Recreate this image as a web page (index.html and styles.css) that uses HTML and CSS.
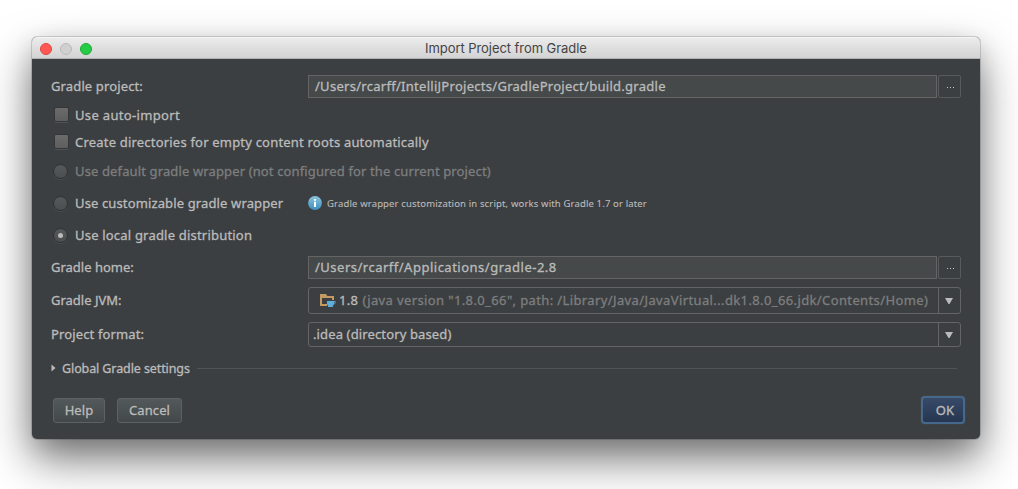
FILE: index.html
```html
<!DOCTYPE html>
<html lang="en">
<head>
<meta charset="utf-8">
<title>Import Project from Gradle</title>
<link rel="stylesheet" href="styles.css">
</head>
<body>
<div class="dialog">
  <div class="titlebar">
    <i class="light light-close"></i><i class="light light-min"></i><i class="light light-zoom"></i>
    <span class="title">Import Project from Gradle</span>
  </div>
  <div class="content">
    <div class="row row-path">
      <label class="label ls-13">Gradle project:</label>
      <div class="input ls-28">/Users/rcarff/IntelliJProjects/GradleProject/build.gradle</div>
      <div class="browse"><i></i><i></i><i></i></div>
    </div>
    <div class="row row-auto"><i class="checkbox"></i><span class="ls-34">Use auto-import</span></div>
    <div class="row row-dirs"><i class="checkbox"></i><span class="ls-20">Create directories for empty content roots automatically</span></div>
    <div class="row row-default"><i class="radio"></i><span class="muted ls-13">Use default gradle wrapper (not configured for the current project)</span></div>
    <div class="row row-radio"><div class="option"><i class="radio"></i><span class="ls-13">Use customizable gradle wrapper</span></div>
      <svg class="info" width="14" height="14" viewBox="0 0 14 14">
        <defs><linearGradient id="blue" x1="0" y1="0" x2="0" y2="1"><stop offset="0" stop-color="#8cc3de"/><stop offset="1" stop-color="#3d8fbe"/></linearGradient></defs>
        <circle cx="7" cy="7" r="6.9" fill="url(#blue)"/>
        <path d="M6 3h2v1.700H6zM6 5.700h2V11H6z" fill="#fff"/>
      </svg>
      <span class="hint">Gradle wrapper customization in script, works with Gradle 1.7 or later</span>
    </div>
    <div class="row row-radio"><i class="radio radio-on"></i><span class="ls-20">Use local gradle distribution</span></div>
    <div class="row row-path row-home">
      <label class="label">Gradle home:</label>
      <div class="input ls-50">/Users/rcarff/Applications/gradle-2.8</div>
      <div class="browse"><i></i><i></i><i></i></div>
    </div>
    <div class="row row-jvm">
      <label class="label">Gradle JVM:</label>
      <div class="combo">
        <div class="combo-text combo-jdk">
          <svg width="16" height="14" viewBox="0 0 16 14">
            <path fill="#c29a62" d="M0 1h6l1.300 2H14v4h-2V5H2v6h5v2H0z"/>
            <path fill="#5cb0de" d="M7 8h7v2.500c0 1.200-.8 2-1.500 2.500h.5v1H8v-1h.5C7.500 12.500 7 11.500 7 10.500z"/>
            <path fill="none" stroke="#5cb0de" stroke-width=".9" d="M13.500 8.500h1.700v1.300c0 .8-.7 1.200-1.700 1.200"/>
          </svg>
          <span class="version">1.8</span><span class="muted ls-38">(java version "1.8.0_66", path: /Library/Java/JavaVirtual...dk1.8.0_66.jdk/Contents/Home)</span>
        </div>
        <div class="arrow"><svg width="8" height="6" viewBox="0 0 8 6"><path d="M0 0h8L4.500 6h-1z" fill="#bbb"/></svg></div>
      </div>
    </div>
    <div class="row row-format">
      <label class="label ls-13">Project format:</label>
      <div class="combo">
        <div class="combo-text ls-13">.idea (directory based)</div>
        <div class="arrow"><svg width="8" height="6" viewBox="0 0 8 6"><path d="M0 0h8L4.500 6h-1z" fill="#bbb"/></svg></div>
      </div>
    </div>
    <div class="row row-global">
      <svg width="5" height="8" viewBox="0 0 5 8"><path d="M.5 .5 4.500 4 .5 7.500z" fill="#bbb"/></svg>
      <span class="global">Global Gradle settings</span>
      <i class="rule"></i>
    </div>
    <div class="buttons">
      <div class="button help">Help</div>
      <div class="button cancel">Cancel</div>
      <div class="button ok">OK</div>
    </div>
  </div>
</div>
</body>
</html>
```
FILE: styles.css
```css
* { box-sizing: border-box; }
body {
  margin: 0;
  height: 489px;
  padding: 37px 38px 0 32px;
  overflow: hidden;
  background: #fff;
  color: #bbb;
  font: 13px/18px "Noto Sans", sans-serif;
  white-space: nowrap;
  -webkit-text-stroke: .3px;
}
i { display: block; flex: none; }
svg { display: block; flex: none; }
.dialog {
  width: 948px;
  height: 402px;
  border-radius: 5px;
  background: #3c3f41;
  box-shadow: 0 0 0 1px rgba(0,0,0,.15), 0 20px 44px rgba(0,0,0,.54), 0 6px 22px rgba(0,0,0,.1);
}
.titlebar {
  display: flex;
  gap: 8px;
  height: 22px;
  padding: 5px 8px 0;
  border-radius: 5px 5px 0 0;
  border-top: 1px solid #f5f5f5;
  border-bottom: 1px solid #b3b3b3;
  background: linear-gradient(#ebebeb, #d3d3d3);
}
.light { width: 12px; height: 12px; border-radius: 50%; border: 1px solid; }
.light-close { background: #ff5855; border-color: #e0443f; }
.light-min { background: #d0d0d0; border-color: #bababa; }
.light-zoom { background: #26cb46; border-color: #18ab34; }
.title {
  margin: -4px 0 0 325px;
  color: #444;
  font: 13px/18px Inter, sans-serif;
  letter-spacing: -.06px;
  -webkit-text-stroke: 0;
}
.content { padding: 16px 19px 0; }
.row { display: flex; align-items: center; }
.label { width: 257px; flex: none; padding-bottom: 2px; }
.ls-13 { letter-spacing: .13px; }
.ls-20 { letter-spacing: .2px; }
.ls-28 { letter-spacing: .28px; }
.ls-34 { letter-spacing: .34px; }
.ls-38 { letter-spacing: .38px; }
.ls-50 { letter-spacing: .5px; }
.muted { color: #7c7e7f; }
.row-path { height: 23px; }
.input {
  width: 629px;
  height: 23px;
  padding-left: 6px;
  line-height: 20px;
  border: 1px solid #646464;
  background: #45494a;
}
.browse {
  display: flex;
  justify-content: center;
  align-items: center;
  gap: 2px;
  width: 23px;
  height: 23px;
  margin-left: 1px;
  padding: 2px 0 0 2px;
  border: 1px solid #585a5b;
  border-radius: 2px;
}
.browse i { width: 1px; height: 1px; background: #c8c8c8; }
.row-auto, .row-dirs { height: 27px; }
.row-auto { margin-top: 3px; }
.row-default { height: 32px; }
.row-radio { height: 32px; }
.checkbox {
  width: 15px;
  height: 15px;
  margin: 0 6px 0 3px;
  border: 1px solid #343637;
  border-radius: 2px;
  background: linear-gradient(#6b6b6b, #5e5e5e);
  box-shadow: 0 1px 0 #505354;
}
.radio {
  display: flex;
  align-items: center;
  justify-content: center;
  width: 15px;
  height: 15px;
  margin: 0 7px 0 2px;
  border: 1px solid #2f3132;
  border-radius: 50%;
  background: linear-gradient(#56595b, #4b4e50);
  box-shadow: 0 1px 0 #4b4e50;
}
.radio-on::before {
  content: "";
  width: 5px;
  height: 5px;
  border-radius: 50%;
  background: #bbb;
}
.option { display: flex; align-items: center; width: 257px; }
.hint { margin: 2px 0 0 5px; font-size: 9.5px; letter-spacing: .15px; -webkit-text-stroke: .1px; }
.row-home { margin-top: 5px; }
.row-jvm { height: 27px; margin-top: 8px; }
.row-format { height: 25px; margin-top: 8px; }
.combo {
  display: flex;
  width: 653px;
  height: 100%;
  border: 1px solid #646464;
  border-radius: 3px;
}
.combo-text { display: flex; align-items: center; flex: 1; padding: 0 0 2px 4px; }
.combo-jdk { padding-left: 11px; }
.combo-jdk svg { margin-top: 1px; }
.version { margin: 0 4px 0 3px; letter-spacing: .35px; }
.arrow {
  display: flex;
  align-items: center;
  justify-content: center;
  width: 22px;
  padding-right: 1px;
  border-left: 1px solid #646464;
}
.row-global { height: 18px; margin-top: 12px; }
.global { margin: 2px 0 0 6px; font-size: 12.5px; letter-spacing: -.1px; }
.rule { width: 760px; height: 1px; margin-left: 7px; background: #515456; }
.buttons { display: flex; align-items: flex-start; margin: 18px -4px 0 2px; height: 29px; }
.button {
  height: 25px;
  margin-top: 3px;
  line-height: 22px;
  text-align: center;
  border: 1px solid #5e6162;
  border-radius: 3px;
  background: linear-gradient(#53585a, #434849);
  letter-spacing: .1px;
}
.help { width: 52px; }
.cancel { width: 65px; margin-left: 12px; }
.ok {
  width: 44px;
  height: 28px;
  margin: 1px 0 0 auto;
  padding-left: 4px;
  line-height: 24px;
  border: 2px solid #46688b;
  border-radius: 4px;
  background: linear-gradient(#374a68, #263650);
  box-shadow: 0 0 1px 0 #46709c;
  letter-spacing: .2px;
}
```
